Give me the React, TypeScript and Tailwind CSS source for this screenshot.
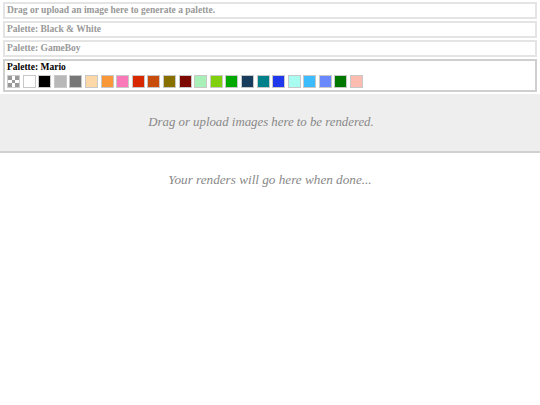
import React from "react";

const colors = [
  "#ffffff", "#000000", "#b8b8b8", "#767676", "#fcd8a8", "#f89838", "#f878b8", "#d82800",
  "#c84c0c", "#887000", "#7c0800", "#a8f0b8", "#80d010", "#00a800", "#183c5c", "#008088",
  "#2038ec", "#a8fcf0", "#3cbcfc", "#6888fc", "#007800", "#fcbcb0",
];

function Checker() {
  return (
    <div className="w-[13px] h-[13px] border border-[#ccc] grid grid-cols-3 grid-rows-3">
      {Array.from({ length: 9 }).map((_, i) => (
        <div key={i} className={i % 2 === 0 ? "bg-[#999]" : "bg-white"} />
      ))}
    </div>
  );
}

export default function App() {
  return (
    <div className="min-h-[405px] bg-white font-['Liberation_Serif']">
      <div className="flex flex-col gap-[2px] px-[3px] pt-[2px]">
        <div className="border-2 border-[#e4e4e4] h-[17px] px-[2px] flex items-center text-[9.5px] font-bold text-[#999]">
          Drag or upload an image here to generate a palette.
        </div>
        <div className="border-2 border-[#e4e4e4] h-[17px] px-[2px] flex items-center text-[9.5px] font-bold text-[#999]">
          Palette: Black &amp; White
        </div>
        <div className="border-2 border-[#e4e4e4] h-[17px] px-[2px] flex items-center text-[9.5px] font-bold text-[#999]">
          Palette: GameBoy
        </div>
        <div className="border-2 border-[#cfcfcf] h-[33px] px-[2px] flex flex-col">
          <div className="text-[9.5px] font-bold text-black leading-[12px]">Palette: Mario</div>
          <div className="flex gap-[2.6px] mt-[2px]">
            <Checker />
            {colors.map((c) => (
              <div
                key={c}
                className="w-[13px] h-[13px] border border-[#c8c8c8]"
                style={{ backgroundColor: c }}
              />
            ))}
          </div>
        </div>
      </div>
      <div className="mt-[2px] h-[59px] bg-[#eeeeee] border-b-2 border-[#d0d0d0] flex items-center justify-center pr-[18px] italic text-[12.8px] text-[#888]">
        Drag or upload images here to be rendered.
      </div>
      <div className="pt-[17px] text-center italic text-[13.2px] text-[#888]">
        Your renders will go here when done...
      </div>
    </div>
  );
}
